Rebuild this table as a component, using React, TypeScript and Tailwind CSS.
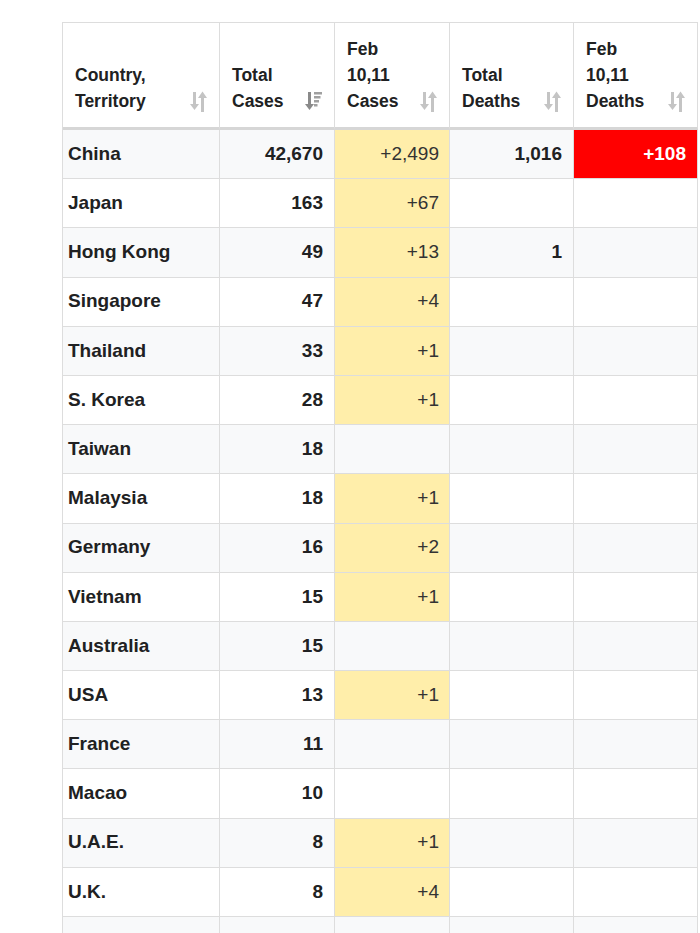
import React from "react";

type Row = {
  name: string;
  total: string;
  newCases?: string;
  deaths?: string;
  newDeaths?: string;
};

const rows: Row[] = [
  { name: "China", total: "42,670", newCases: "+2,499", deaths: "1,016", newDeaths: "+108" },
  { name: "Japan", total: "163", newCases: "+67" },
  { name: "Hong Kong", total: "49", newCases: "+13", deaths: "1" },
  { name: "Singapore", total: "47", newCases: "+4" },
  { name: "Thailand", total: "33", newCases: "+1" },
  { name: "S. Korea", total: "28", newCases: "+1" },
  { name: "Taiwan", total: "18" },
  { name: "Malaysia", total: "18", newCases: "+1" },
  { name: "Germany", total: "16", newCases: "+2" },
  { name: "Vietnam", total: "15", newCases: "+1" },
  { name: "Australia", total: "15" },
  { name: "USA", total: "13", newCases: "+1" },
  { name: "France", total: "11" },
  { name: "Macao", total: "10" },
  { name: "U.A.E.", total: "8", newCases: "+1" },
  { name: "U.K.", total: "8", newCases: "+4" },
  { name: "", total: "" },
];

function SortBoth() {
  return (
    <svg width="17" height="21" viewBox="0 0 17 21" className="shrink-0 mb-[2px]">
      <rect x="3" y="1" width="3" height="13" fill="#c4c4c4" />
      <polygon points="0,13 9,13 4.5,19" fill="#c4c4c4" />
      <polygon points="8,7 17,7 12.5,0.5" fill="#c4c4c4" />
      <rect x="11" y="6" width="3" height="15" fill="#c4c4c4" />
    </svg>
  );
}

function SortDesc() {
  return (
    <svg width="17" height="21" viewBox="0 0 17 21" className="shrink-0 mb-[2px]">
      <rect x="3" y="1" width="3" height="13" fill="#8a8a8a" />
      <polygon points="0,13 9,13 4.5,19" fill="#8a8a8a" />
      <rect x="9" y="1" width="8" height="2.5" fill="#a0a0a0" />
      <rect x="9" y="5" width="6.5" height="2.5" fill="#a0a0a0" />
      <rect x="9" y="9" width="5" height="2.5" fill="#a0a0a0" />
      <rect x="9" y="13" width="3.5" height="2.5" fill="#a0a0a0" />
    </svg>
  );
}

function HeaderCell({ lines, active, last }: { lines: string[]; active?: boolean; last?: boolean }) {
  return (
    <div
      className={
        "h-[107px] border-b-[3px] border-b-[#d6d6d6] px-3 pt-[13px] pb-[13px] flex items-end justify-between bg-white " +
        (last ? "border-r border-r-[#dddddd]" : "border-r border-r-[#dddddd]")
      }
    >
      <div className="text-[17.5px] leading-[26px] font-bold text-[#202122]">
        {lines.map((l, i) => (
          <div key={i}>{l}</div>
        ))}
      </div>
      {active ? <SortDesc /> : <SortBoth />}
    </div>
  );
}

export default function App() {
  return (
    <div className="w-[700px] h-[933px] overflow-hidden bg-white" style={{ fontFamily: '"Liberation Sans", Arial, sans-serif' }}>
      <div className="pt-[22px] pl-[62px]">
        <div className="w-[636px] border-l border-t border-[#dddddd] grid grid-cols-[157px_115px_115px_124px_124px]">
          <HeaderCell lines={["Country,", "Territory"]} />
          <HeaderCell lines={["Total", "Cases"]} active />
          <HeaderCell lines={["Feb", "10,11", "Cases"]} />
          <HeaderCell lines={["Total", "Deaths"]} />
          <HeaderCell lines={["Feb", "10,11", "Deaths"]} last />

          {rows.map((r, i) => {
            const stripe = i % 2 === 0 ? "bg-[#f8f9fa]" : "bg-white";
            const cell = "h-[49.2px] border-r border-b border-[#dddddd] flex items-center text-[19px] ";
            return (
              <React.Fragment key={i}>
                <div className={cell + stripe + " pl-[5px] font-bold text-[#202122]"}>{r.name}</div>
                <div className={cell + stripe + " justify-end pr-[11px] font-bold text-[#202122]"}>{r.total}</div>
                <div
                  className={
                    cell +
                    (r.newCases ? "bg-[#ffeeaa]" : stripe) +
                    " justify-end pr-[10px] text-[#333333]"
                  }
                >
                  {r.newCases}
                </div>
                <div className={cell + stripe + " justify-end pr-[11px] font-bold text-[#202122]"}>{r.deaths}</div>
                <div
                  className={
                    cell +
                    (r.newDeaths ? "bg-[#ff0000] text-white" : stripe + " text-[#202122]") +
                    " justify-end pr-[11px] font-bold"
                  }
                >
                  {r.newDeaths}
                </div>
              </React.Fragment>
            );
          })}
        </div>
      </div>
    </div>
  );
}
